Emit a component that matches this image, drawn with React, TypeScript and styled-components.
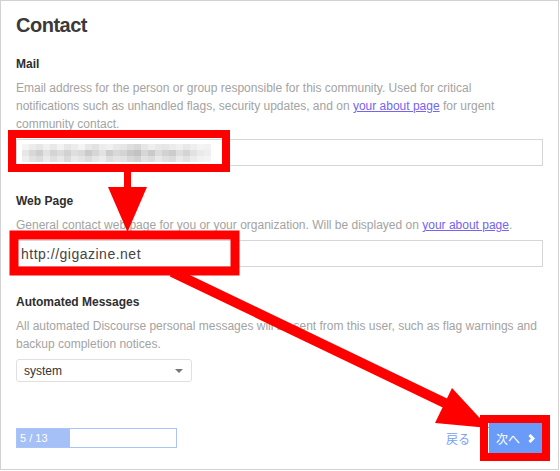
import React from "react";
import styled, {createGlobalStyle} from "styled-components";

const GlobalStyle = createGlobalStyle`
  body {
    margin: 0;
    background: #fff;
    font-family: "Liberation Sans", "Noto Sans CJK JP", sans-serif;
  }
`

// grey levels of the pixelated (hidden) mail address
const mosaic = [
    [244, 236, 230, 240, 232, 242, 230, 236, 244, 232, 226, 236, 240, 232, 230, 222, 216, 230, 238, 232, 230, 236, 240, 232, 238, 244, 242],
    [230, 216, 206, 226, 212, 220, 210, 222, 218, 202, 214, 226, 204, 216, 212, 200, 194, 214, 202, 220, 210, 204, 222, 212, 226, 234, 238],
    [238, 226, 220, 234, 224, 232, 218, 234, 228, 220, 230, 236, 222, 228, 226, 216, 210, 226, 220, 232, 224, 220, 234, 226, 236, 242, 244],
]

const App = () => {
    return (
        <Stage>
            <GlobalStyle/>
            <Panel>
                <Title>Contact</Title>

                <Field>
                    <Label>Mail</Label>
                    <Desc>
                        Email address for the person or group responsible for this community. Used for critical<br/>
                        notifications such as unhandled flags, security updates, and on <Link>your about page</Link> for urgent<br/>
                        community contact.
                    </Desc>
                    <TextField>
                        <Mosaic>
                            {mosaic.map((row, r) => (
                                <MosaicRow key={r}>
                                    {row.map((g, c) => <Cell key={c} $grey={g}/>)}
                                </MosaicRow>
                            ))}
                        </Mosaic>
                    </TextField>
                </Field>

                <Field>
                    <Label>Web Page</Label>
                    <Desc>
                        General contact web page for you or your organization. Will be displayed on <Link>your about page</Link>.
                    </Desc>
                    <TextField>
                        <Value>http://gigazine.net</Value>
                    </TextField>
                </Field>

                <Field>
                    <Label>Automated Messages</Label>
                    <Desc>
                        All automated Discourse personal messages will be sent from this user, such as flag warnings and<br/>
                        backup completion notices.
                    </Desc>
                    <Select>
                        <span>system</span>
                        <Caret/>
                    </Select>
                </Field>

                <Footer>
                    <Progress>
                        <ProgressFill $width={53}>5 / 13</ProgressFill>
                    </Progress>
                    <Actions>
                        <BackLink>戻る</BackLink>
                        <NextButton>
                            次へ
                            <svg width="7" height="9" viewBox="0 0 7 9">
                                <polyline points="1.5,1 5,4.5 1.5,8" fill="none" stroke="#fff" strokeWidth="3"/>
                            </svg>
                        </NextButton>
                    </Actions>
                </Footer>
            </Panel>

            {/* red annotations drawn over the page */}
            <Overlay width="560" height="471" viewBox="0 0 560 471">
                <rect x="12" y="134" width="214" height="34" fill="none" stroke="#f00" strokeWidth="8"/>
                <rect x="14" y="235" width="221" height="36" fill="none" stroke="#f00" strokeWidth="9"/>
                <rect x="484" y="419" width="62" height="38" fill="none" stroke="#f00" strokeWidth="8"/>

                <rect x="124" y="168" width="7" height="22" fill="#f00"/>
                <polygon points="108,187 147,187 127.5,232" fill="#f00"/>

                <line x1="172" y1="272" x2="447" y2="404" stroke="#f00" strokeWidth="10"/>
                <polygon points="452,388 435,423 489,428" fill="#f00"/>
            </Overlay>
        </Stage>
    )
}

export default App

const Stage = styled.div`
  position: relative;
  width: 560px;
  height: 471px;
`

const Panel = styled.div`
  box-sizing: border-box;
  width: 559px;
  height: 470px;
  border: 1px solid #d2d2d2;
  padding: 12px 15px 16px;
  display: flex;
  flex-direction: column;
  color: #333;
`

const Title = styled.h1`
  margin: 0;
  font-size: 20px;
  line-height: 24px;
  letter-spacing: -0.5px;
  font-weight: bold;
  color: #3a3a3a;
`

const Field = styled.div`
  display: flex;
  flex-direction: column;
  margin-top: 27px;

  &:first-of-type {
    margin-top: 19px;
  }
`

const Label = styled.div`
  font-size: 12px;
  line-height: 16px;
  font-weight: bold;
  color: #2e2e2e;
`

const Desc = styled.div`
  margin-top: 7px;
  font-size: 12px;
  line-height: 18px;
  color: #a3a3a3;
  white-space: nowrap;
`

const Link = styled.a`
  color: #7464ee;
  text-decoration: underline;
  cursor: pointer;
`

const TextField = styled.div`
  box-sizing: border-box;
  margin-top: 6px;
  height: 27px;
  border: 1px solid #d6d6d6;
  background: #fff;
  display: flex;
  align-items: center;
  padding: 0 4px;
`

const Value = styled.span`
  font-size: 14px;
  letter-spacing: 0.5px;
  color: #444;
`

const Mosaic = styled.div`
  display: flex;
  flex-direction: column;
  margin-left: 1px;
`

const MosaicRow = styled.div`
  display: flex;
`

const Cell = styled.div<{ $grey: number }>`
  width: 7px;
  height: 6px;
  background: ${p => `rgb(${p.$grey}, ${p.$grey}, ${p.$grey})`};
`

const Select = styled.div`
  box-sizing: border-box;
  margin-top: 6px;
  width: 176px;
  height: 23px;
  border: 1px solid #e0e0e0;
  border-radius: 3px;
  padding: 0 8px 0 7px;
  display: flex;
  align-items: center;
  justify-content: space-between;
  font-size: 12px;
  color: #333;
`

const Caret = styled.span`
  width: 0;
  height: 0;
  border-left: 4px solid transparent;
  border-right: 4px solid transparent;
  border-top: 4px solid #777;
`

const Footer = styled.div`
  margin-top: auto;
  display: flex;
  align-items: center;
  justify-content: space-between;
`

const Progress = styled.div`
  box-sizing: border-box;
  width: 161px;
  height: 20px;
  border: 1px solid #a9c4f7;
  background: #fff;
  display: flex;
`

const ProgressFill = styled.div<{ $width: number }>`
  width: ${p => p.$width}px;
  background: #a5c0f6;
  color: #fff;
  font-size: 11px;
  line-height: 18px;
  padding-left: 3px;
  box-sizing: border-box;
`

const Actions = styled.div`
  display: flex;
  align-items: center;
  gap: 19px;
`

const BackLink = styled.a`
  font-size: 12px;
  color: #78a0f4;
  cursor: pointer;
`

const NextButton = styled.button`
  box-sizing: border-box;
  width: 54px;
  height: 30px;
  border: 0;
  border-radius: 0;
  background: #6a9bf8;
  color: #fff;
  font-family: "Liberation Sans", "Noto Sans CJK JP", sans-serif;
  font-size: 12px;
  display: flex;
  align-items: center;
  gap: 8px;
  padding: 0 0 0 7px;
  cursor: pointer;
`

const Overlay = styled.svg`
  position: absolute;
  top: 0;
  left: 0;
  pointer-events: none;
`
